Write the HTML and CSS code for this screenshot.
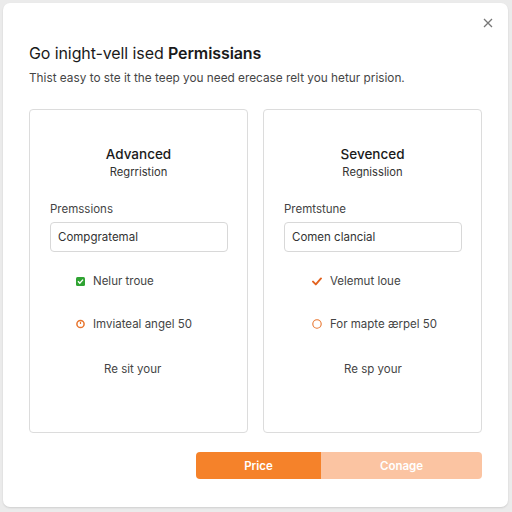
FILE: index.html
```html
<!DOCTYPE html>
<html>
<head>
<meta charset="utf-8">
<link rel="stylesheet" href="styles.css">
</head>
<body>
<div class="modal">
  <button class="close" aria-label="Close">
    <svg width="10" height="10" viewBox="0 0 10 10"><path d="M1 1L9 9M9 1L1 9" stroke="#777" stroke-width="1.3" fill="none"/></svg>
  </button>
  <h1 class="title">Go inight-vell ised <b>Permissians</b></h1>
  <p class="subtitle">Thist easy to ste it the teep you need erecase relt you hetur prision.</p>
  <div class="cards">
    <div class="card">
      <div class="card-title">Advanced</div>
      <div class="card-sub">Regrristion</div>
      <div class="label">Premssions</div>
      <div class="input">Compgratemal</div>
      <div class="row row-first">
        <svg class="ico" width="9" height="9" viewBox="0 0 9 9"><rect x="0" y="0" width="9" height="9" rx="1.5" fill="#2fa332"/><path d="M2 4.3L3.8 6.2L7 2.6" stroke="#fff" stroke-width="1.4" fill="none"/></svg>
        <span>Nelur troue</span>
      </div>
      <div class="row row-second">
        <svg class="ico" width="9" height="10" viewBox="0 0 9 10"><circle cx="4.5" cy="5" r="3.6" stroke="#e8742c" stroke-width="1.5" fill="none"/><path d="M4.5 2.8V5" stroke="#e8742c" stroke-width="1.2"/></svg>
        <span>Imviateal angel 50</span>
      </div>
      <div class="foot">Re sit your</div>
    </div>
    <div class="card card-right">
      <div class="card-title">Sevenced</div>
      <div class="card-sub">Regnisslion</div>
      <div class="label">Premtstune</div>
      <div class="input">Comen clancial</div>
      <div class="row row-first">
        <svg class="ico" width="10" height="9" viewBox="0 0 10 9"><path d="M1 4.6L3.8 7.4L9 1.4" stroke="#e2621f" stroke-width="1.9" fill="none" stroke-linecap="round" stroke-linejoin="round"/></svg>
        <span>Velemut loue</span>
      </div>
      <div class="row row-second">
        <svg class="ico" width="10" height="10" viewBox="0 0 10 10"><circle cx="5" cy="5" r="4.2" stroke="#e8742c" stroke-width="1.1" fill="none"/></svg>
        <span>For mapte ærpel 50</span>
      </div>
      <div class="foot">Re sp your</div>
    </div>
  </div>
  <div class="actions">
    <button class="btn btn-primary">Price</button>
    <button class="btn btn-secondary">Conage</button>
  </div>
</div>
</body>
</html>
```
FILE: styles.css
```css
* { box-sizing: border-box; }
html, body { margin: 0; padding: 0; }
body {
  width: 512px;
  height: 512px;
  background: #ebebeb;
  font-family: Inter, "Liberation Sans", sans-serif;
  color: #222;
  padding: 3px 4px 5px 3px;
}
.modal {
  position: relative;
  background: #fff;
  border-radius: 7px;
  height: 504px;
  padding: 0 26px 0 26px;
  box-shadow: 0 1px 2px rgba(0,0,0,0.12);
}
.close {
  position: absolute;
  top: 15px;
  right: 15px;
  border: 0;
  background: none;
  padding: 0;
  width: 10px;
  height: 10px;
  display: flex;
}
.title {
  margin: 0;
  padding-top: 40px;
  font-size: 16px;
  font-weight: 400;
  line-height: 20px;
  color: #1a1a1a;
  letter-spacing: -0.1px;
}
.title b { font-weight: 600; }
.subtitle {
  margin: 7px 0 0 0;
  font-size: 11.8px;
  line-height: 16px;
  color: #454545;
}
.cards {
  display: flex;
  gap: 15px;
  margin-top: 23px;
}
.card {
  width: 219px;
  height: 324px;
  border: 1px solid #dcdcdc;
  border-radius: 4px;
  padding: 35px 20px 0 20px;
  display: flex;
  flex-direction: column;
}
.card-title {
  text-align: center;
  font-size: 13.5px;
  line-height: 18px;
  font-weight: 500;
  color: #1a1a1a;
}
.card-sub {
  text-align: center;
  font-size: 11.2px;
  line-height: 14px;
  margin-top: 2px;
  color: #333;
}
.label {
  margin-top: 23px;
  font-size: 11.5px;
  line-height: 14px;
  color: #444;
}
.input {
  margin-top: 6px;
  height: 30px;
  width: 178px;
  border: 1px solid #d8d8d8;
  border-radius: 4px;
  padding: 0 0 0 7px;
  display: flex;
  align-items: center;
  font-size: 11.5px;
  color: #333;
}
.row {
  display: flex;
  align-items: center;
  gap: 8px;
  padding-left: 26px;
  font-size: 11.5px;
  line-height: 14px;
  color: #444;
}
.card-right .row { padding-left: 28px; }
.row-first { margin-top: 22px; }
.row-second { margin-top: 29px; }
.ico { flex: none; }
.foot {
  margin-top: 31px;
  padding-left: 54px;
  font-size: 11.5px;
  line-height: 14px;
  color: #444;
}
.card-right .foot { padding-left: 60px; }
.actions {
  display: flex;
  justify-content: flex-end;
  margin-top: 19px;
}
.btn {
  border: 0;
  height: 27px;
  font-family: Inter, "Liberation Sans", sans-serif;
  font-size: 11.5px;
  font-weight: 600;
  color: #fff;
  padding: 0;
}
.btn-primary {
  width: 125px;
  background: #f5822a;
  border-radius: 4px 0 0 4px;
}
.btn-secondary {
  width: 161px;
  background: #fbc4a2;
  border-radius: 0 4px 4px 0;
}
```
